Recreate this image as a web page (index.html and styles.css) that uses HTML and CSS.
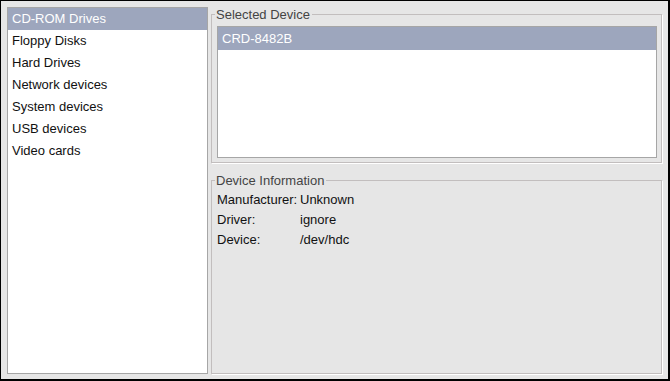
FILE: index.html
```html
<!DOCTYPE html>
<html lang="en">
<head>
  <meta charset="UTF-8">
  <title>Hardware Browser</title>
  <link rel="stylesheet" href="styles.css">
</head>
<body>

  <div class="window">
    <ul class="categories">
      <li class="selected">CD-ROM Drives</li>
      <li>Floppy Disks</li>
      <li>Hard Drives</li>
      <li>Network devices</li>
      <li>System devices</li>
      <li>USB devices</li>
      <li>Video cards</li>
    </ul>

    <div class="details">
      <fieldset class="frame device-frame">
        <legend>Selected Device</legend>
        <ul class="devices">
          <li class="selected">CRD-8482B</li>
        </ul>
      </fieldset>

      <fieldset class="frame info-frame">
        <legend>Device Information</legend>
        <div class="info">
          <span>Manufacturer:</span><span>Unknown</span>
          <span>Driver:</span><span>ignore</span>
          <span>Device:</span><span>/dev/hdc</span>
        </div>
      </fieldset>
    </div>
  </div>

</body>
</html>
```

FILE: styles.css
```css
body {
  margin: 0;
  font-family: 'Liberation Sans', Arial, sans-serif;
  font-size: 13px;
  color: #111;
}

.window {
  width: 670px;
  height: 381px;
  box-sizing: border-box;
  border-top: 1px solid #000;
  border-left: 1px solid #000;
  border-right: 2px solid #000;
  border-bottom: 2px solid #000;
  background: #e6e6e6;
  padding: 6px 6px 5px 6px;
  display: flex;
  gap: 3px;
}

ul {
  list-style: none;
  margin: 0;
  padding: 0;
}

.categories {
  width: 201px;
  flex: none;
  box-sizing: border-box;
  background: #fff;
  border: 1px solid #a6a6a6;
}

.categories li {
  height: 22px;
  line-height: 22px;
  padding-left: 4px;
}

.selected {
  background: #9da6bd;
  color: #fff;
}

.details {
  flex: 1;
  display: flex;
  flex-direction: column;
  gap: 10px;
}

.frame {
  margin: 0;
  border: 1px solid #c2bebe;
  box-shadow: 1px 1px 0 #fff;
  min-width: 0;
}

.frame legend {
  color: #444;
  padding: 0 2px 0 1px;
  margin-left: -2px;
  line-height: 15px;
}

.device-frame {
  padding: 4px 4px 4px 5px;
}

.devices {
  height: 132px;
  box-sizing: border-box;
  background: #fff;
  border: 1px solid #a6a6a6;
}

.devices li {
  height: 23px;
  line-height: 23px;
  padding-left: 4px;
}

.info-frame {
  flex: 1;
  padding: 1px 4px 4px 5px;
}

.info {
  display: grid;
  grid-template-columns: 83px auto;
  grid-auto-rows: 20px;
  align-items: center;
}
```
